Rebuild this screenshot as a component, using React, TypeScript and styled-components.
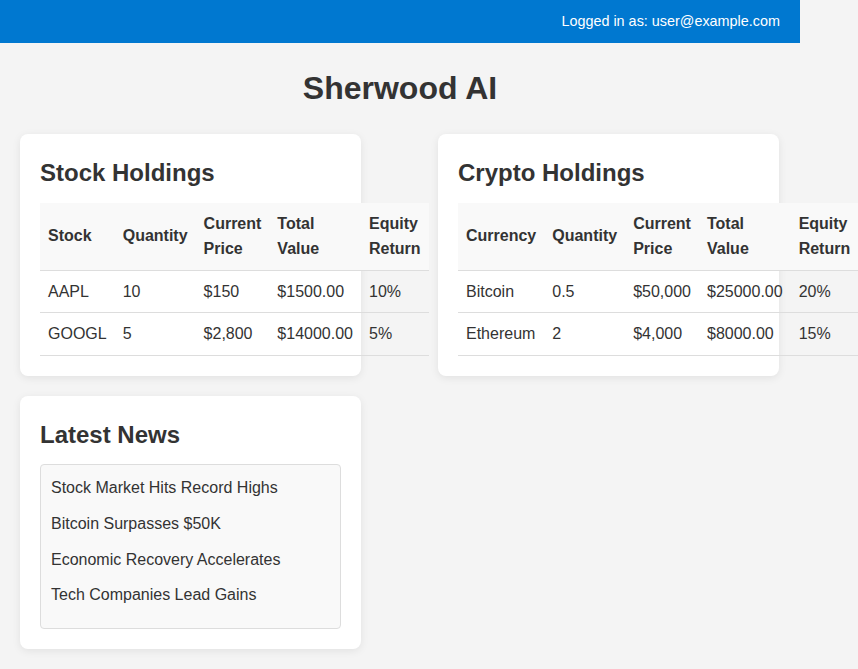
import React from "react";
import styled, { createGlobalStyle } from "styled-components";

const Global = createGlobalStyle`
  html, body { margin: 0; padding: 0; background: #f4f4f4; }
  body {
    font-family: "Liberation Sans", Arial, Helvetica, sans-serif;
    color: #333;
    line-height: 1.6;
  }
  * { box-sizing: border-box; }
`;

const Page = styled.div`
  width: 800px;
`;

const TopBar = styled.header`
  background: #0078d0;
  color: #fff;
  padding: 10px 20px;
  font-size: 14.4px;
  display: flex;
  justify-content: flex-end;
`;

const Title = styled.h1`
  margin: 20px 0;
  text-align: center;
  font-size: 32px;
  font-weight: bold;
`;

const Grid = styled.main`
  display: grid;
  grid-template-columns: 341px 341px;
  column-gap: 77px;
  row-gap: 20px;
  padding: 0 20px 20px;
  align-items: start;
`;

const Card = styled.section`
  background: #fff;
  border-radius: 8px;
  box-shadow: 0 2px 8px rgba(0, 0, 0, 0.08);
  padding: 20px;
`;

const CardTitle = styled.h2`
  margin: 0 0 10px;
  font-size: 24px;
  font-weight: bold;
`;

const Table = styled.table`
  width: 100%;
  border-collapse: collapse;
  font-size: 16px;
`;

const Th = styled.th`
  text-align: left;
  padding: 8px;
  background: #f9f9f9;
  border-bottom: 1px solid #ddd;
  font-weight: bold;
`;

const Td = styled.td`
  text-align: left;
  padding: 8px;
  border-bottom: 1px solid #ddd;
  white-space: nowrap;
`;

const NewsList = styled.ul`
  list-style: none;
  margin: 0;
  padding: 10px;
  background: #f9f9f9;
  border: 1px solid #ddd;
  border-radius: 4px;
`;

const NewsItem = styled.li`
  margin-bottom: 10px;
  font-size: 16px;
`;

type Row = string[];

const Holdings: React.FC<{ title: string; headers: string[]; rows: Row[] }> = ({ title, headers, rows }) => (
  <Card>
    <CardTitle>{title}</CardTitle>
    <Table>
      <thead>
        <tr>
          {headers.map((h) => (
            <Th key={h}>{h}</Th>
          ))}
        </tr>
      </thead>
      <tbody>
        {rows.map((r) => (
          <tr key={r[0]}>
            {r.map((c, i) => (
              <Td key={i}>{c}</Td>
            ))}
          </tr>
        ))}
      </tbody>
    </Table>
  </Card>
);

export default function App() {
  return (
    <Page>
      <Global />
      <TopBar>Logged in as: user@example.com</TopBar>
      <Title>Sherwood AI</Title>
      <Grid>
        <Holdings
          title="Stock Holdings"
          headers={["Stock", "Quantity", "Current Price", "Total Value", "Equity Return"]}
          rows={[
            ["AAPL", "10", "$150", "$1500.00", "10%"],
            ["GOOGL", "5", "$2,800", "$14000.00", "5%"],
          ]}
        />
        <Holdings
          title="Crypto Holdings"
          headers={["Currency", "Quantity", "Current Price", "Total Value", "Equity Return"]}
          rows={[
            ["Bitcoin", "0.5", "$50,000", "$25000.00", "20%"],
            ["Ethereum", "2", "$4,000", "$8000.00", "15%"],
          ]}
        />
        <Card>
          <CardTitle>Latest News</CardTitle>
          <NewsList>
            <NewsItem>Stock Market Hits Record Highs</NewsItem>
            <NewsItem>Bitcoin Surpasses $50K</NewsItem>
            <NewsItem>Economic Recovery Accelerates</NewsItem>
            <NewsItem>Tech Companies Lead Gains</NewsItem>
          </NewsList>
        </Card>
      </Grid>
    </Page>
  );
}
